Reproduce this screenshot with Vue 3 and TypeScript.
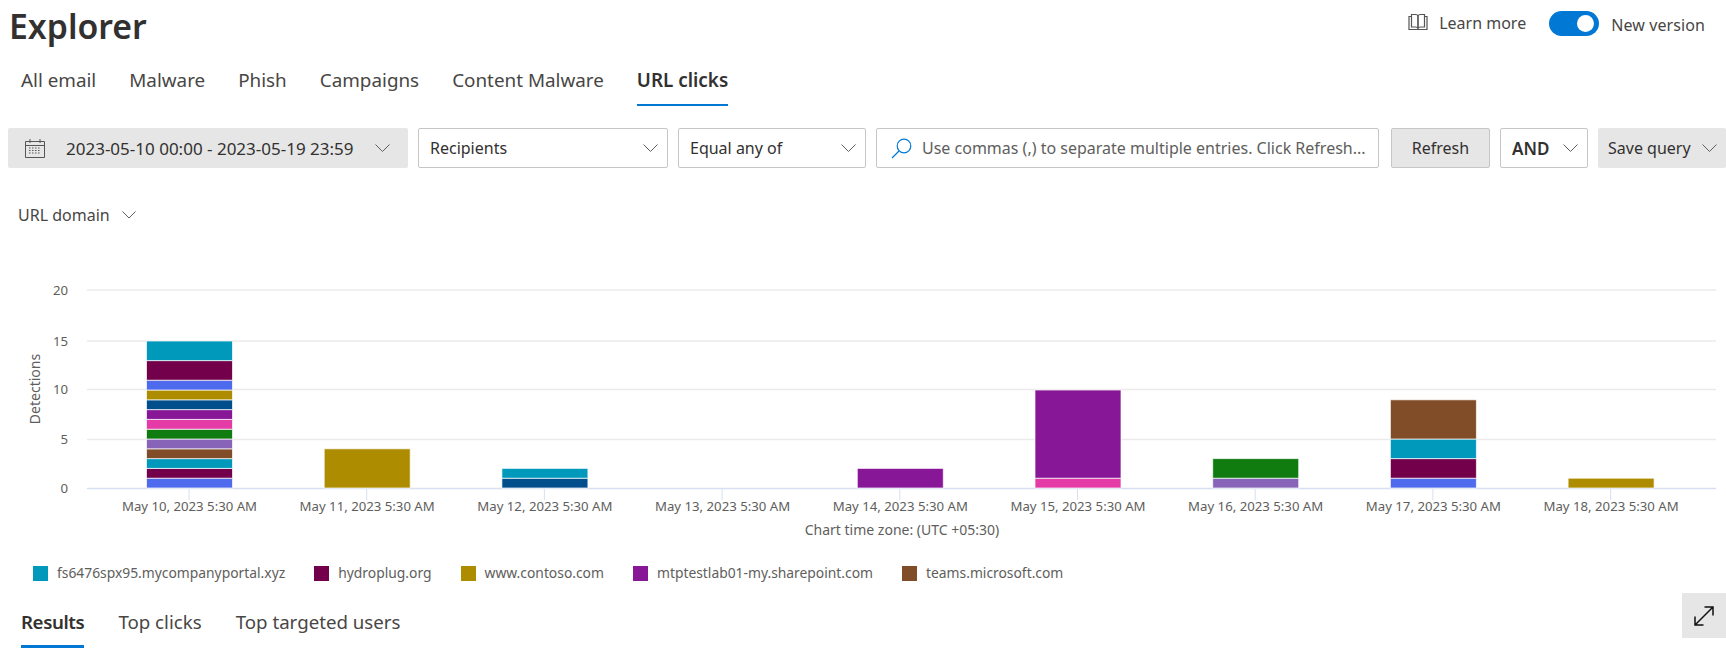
<template>
  <div class="page">
    <header class="top">
      <h1 class="title">Explorer</h1>
      <div class="top-actions">
        <svg class="book" width="20" height="18" viewBox="0 0 20 18" fill="none" stroke="#555" stroke-width="1.2">
          <path d="M3.5 1.5h4c1.3 0 2.5.8 2.5 2v12c-.5-1-1.4-1.500-2.500-1.500h-4z" />
          <path d="M16.500 1.500h-4c-1.300 0-2.500.8-2.500 2v12c.5-1 1.400-1.500 2.500-1.500h4z" />
          <path d="M3.500 3.500H1v13h18v-13h-2.500" />
        </svg>
        <span class="learn">Learn more</span>
        <span class="toggle"><span class="knob"></span></span>
        <span class="version">New version</span>
      </div>
    </header>

    <nav class="tabs main-tabs">
      <span v-for="t in mainTabs" :key="t" class="tab" :class="{ active: t === 'URL clicks' }">{{ t }}</span>
    </nav>

    <div class="toolbar">
      <div class="field date">
        <svg width="20" height="20" viewBox="0 0 20 20" fill="none" stroke="#555">
          <path d="M.5 3.500h19v16H.5zM.5 7.500h19M5 1v4M15 1v4" />
          <path d="M4 10h12M4 12.500h12M4 15h12" stroke-dasharray="1.500 1.500" />
        </svg>
        <span class="date-text">2023-05-10 00:00 - 2023-05-19 23:59</span>
        <svg class="chev" width="15" height="8" viewBox="0 0 15 8"><path d="M.5.5l7 7 7-7" /></svg>
      </div>
      <div class="field box recipients">
        <span>Recipients</span>
        <svg class="chev" width="15" height="8" viewBox="0 0 15 8"><path d="M.5.5l7 7 7-7" /></svg>
      </div>
      <div class="field box equal">
        <span>Equal any of</span>
        <svg class="chev" width="15" height="8" viewBox="0 0 15 8"><path d="M.5.5l7 7 7-7" /></svg>
      </div>
      <div class="field box search">
        <svg width="21" height="21" viewBox="0 0 21 21" fill="none" stroke="#0078d4" stroke-width="1.200">
          <circle cx="13" cy="8" r="6.800" />
          <path d="M8 13l-7 7" />
        </svg>
        <span class="placeholder">Use commas (,) to separate multiple entries. Click Refresh...</span>
      </div>
      <div class="field refresh">Refresh</div>
      <div class="field box and">
        <b>AND</b>
        <svg class="chev" width="15" height="8" viewBox="0 0 15 8"><path d="M.5.5l7 7 7-7" /></svg>
      </div>
      <div class="field save">
        <span>Save query</span>
        <svg class="chev" width="15" height="8" viewBox="0 0 15 8"><path d="M.5.5l7 7 7-7" /></svg>
      </div>
    </div>

    <div class="group-by">
      <span>URL domain</span>
      <svg class="chev" width="14" height="8" viewBox="0 0 14 8"><path d="M.5.5L7 7 13.500.5" /></svg>
    </div>

    <svg class="chart" width="1726" height="300" viewBox="0 240 1726 300">
      <g v-for="g in grid" :key="g.label">
        <line v-if="g.label !== '0'" x1="87" x2="1716" :y1="g.y" :y2="g.y" stroke="#edebe9" stroke-width="1.500" />
        <text x="68" :y="g.y + 4.500" text-anchor="end" class="axis">{{ g.label }}</text>
      </g>
      <text class="axis title-text" text-anchor="middle" transform="translate(40 389) rotate(-90)">Detections</text>

      <line x1="87" x2="1716" y1="488.500" y2="488.500" stroke="#d6e0f0" stroke-width="1.500" />
      <g v-for="(day, i) in days" :key="day.label">
        <line :x1="cx(i)" :x2="cx(i)" y1="489" y2="500" stroke="#d6e0f0" />
        <text :x="cx(i) + 0.500" y="510.500" text-anchor="middle" class="axis">{{ day.label }}</text>
        <rect
          v-for="s in segments(day.stack)"
          :key="s.y"
          :x="cx(i) - 42.500"
          :y="s.y"
          width="86"
          :height="s.h"
          :fill="s.color"
          stroke="#fff"
          stroke-opacity="0.700"
        />
      </g>
      <text x="902" y="535" text-anchor="middle" class="axis title-text">Chart time zone: (UTC +05:30)</text>
    </svg>

    <div class="legend">
      <span v-for="l in legend" :key="l.name" class="legend-item">
        <i class="swatch" :style="{ background: l.color }"></i>{{ l.name }}
      </span>
    </div>

    <div class="bottom">
      <nav class="tabs result-tabs">
        <span v-for="t in resultTabs" :key="t" class="tab" :class="{ active: t === 'Results' }">{{ t }}</span>
      </nav>
      <div class="expand">
        <svg width="22" height="22" viewBox="0 0 22 22" fill="none" stroke="#111" stroke-width="1.500">
          <path d="M2.500 19.500l17-17M11.500 2h8.500v8.500M2 11.500V20h8.500" />
        </svg>
      </div>
    </div>
  </div>
</template>

<script setup lang="ts">
const mainTabs = ['All email', 'Malware', 'Phish', 'Campaigns', 'Content Malware', 'URL clicks']
const resultTabs = ['Results', 'Top clicks', 'Top targeted users']

const c = {
  cyan: '#0099bc',
  maroon: '#72004a',
  blue: '#4f6bed',
  gold: '#ae8c00',
  navy: '#004e8c',
  purple: '#881798',
  pink: '#e43ba6',
  green: '#107c10',
  violet: '#8764b8',
  brown: '#814d28'
}

const grid = [
  { label: '20', y: 290 },
  { label: '15', y: 341 },
  { label: '10', y: 389.5 },
  { label: '5', y: 439.5 },
  { label: '0', y: 488 }
]

// stacks are bottom to top, [colour, count]
const days: Array<{ label: string; stack: Array<[string, number]> }> = [
  {
    label: 'May 10, 2023 5:30 AM',
    stack: [
      [c.blue, 1], [c.maroon, 1], [c.cyan, 1], [c.brown, 1], [c.violet, 1], [c.green, 1], [c.pink, 1],
      [c.purple, 1], [c.navy, 1], [c.gold, 1], [c.blue, 1], [c.maroon, 2], [c.cyan, 2]
    ]
  },
  { label: 'May 11, 2023 5:30 AM', stack: [[c.gold, 4]] },
  { label: 'May 12, 2023 5:30 AM', stack: [[c.navy, 1], [c.cyan, 1]] },
  { label: 'May 13, 2023 5:30 AM', stack: [] },
  { label: 'May 14, 2023 5:30 AM', stack: [[c.purple, 2]] },
  { label: 'May 15, 2023 5:30 AM', stack: [[c.pink, 1], [c.purple, 9]] },
  { label: 'May 16, 2023 5:30 AM', stack: [[c.violet, 1], [c.green, 2]] },
  { label: 'May 17, 2023 5:30 AM', stack: [[c.blue, 1], [c.maroon, 2], [c.cyan, 2], [c.brown, 4]] },
  { label: 'May 18, 2023 5:30 AM', stack: [[c.gold, 1]] }
]

const legend = [
  { name: 'fs6476spx95.mycompanyportal.xyz', color: c.cyan },
  { name: 'hydroplug.org', color: c.maroon },
  { name: 'www.contoso.com', color: c.gold },
  { name: 'mtptestlab01-my.sharepoint.com', color: c.purple },
  { name: 'teams.microsoft.com', color: c.brown }
]

function cx(i: number): number {
  return 189 + i * 177.7
}

function segments(stack: Array<[string, number]>) {
  const out: Array<{ y: number; h: number; color: string }> = []
  let total = 0
  for (const [color, n] of stack) {
    const bottom = 488 - total * 9.8
    total += n
    const top = 488 - total * 9.8
    out.push({ y: top, h: bottom - top, color })
  }
  return out
}
</script>

<style scoped>
.page {
  width: 1726px;
  height: 652px;
  overflow: hidden;
  background: #fff;
  color: #323130;
  font-family: 'Noto Sans', 'Open Sans', sans-serif;
}
.top {
  height: 60px;
  display: flex;
  justify-content: space-between;
  padding-left: 9px;
  padding-right: 21px;
}
.title {
  margin: 6px 0 0;
  font-size: 33.8px;
  line-height: 40px;
  font-weight: 600;
}
.top-actions {
  display: flex;
  align-items: flex-start;
  padding-top: 11px;
  font-size: 16px;
  color: #484644;
}
.book {
  margin-top: 2px;
  margin-right: 11px;
}
.learn {
  line-height: 24px;
}
.toggle {
  width: 50px;
  height: 25px;
  margin: 0 12px 0 23px;
  border-radius: 13px;
  background: #0078d4;
  position: relative;
}
.knob {
  position: absolute;
  right: 5px;
  top: 4px;
  width: 17px;
  height: 17px;
  border-radius: 50%;
  background: #fff;
}
.version {
  line-height: 28px;
  letter-spacing: 0.1px;
}
.tabs {
  display: flex;
}
.tab {
  box-sizing: border-box;
  color: #484644;
  border-bottom-style: solid;
  border-bottom-color: transparent;
}
.tabs .tab.active {
  font-weight: 600;
  color: #323130;
  border-bottom-color: #0078d4;
}
.main-tabs {
  height: 46px;
  padding-left: 21px;
  gap: 33px;
  font-size: 18.85px;
}
.main-tabs .tab {
  height: 46px;
  line-height: 40px;
  border-bottom-width: 2px;
}
.toolbar {
  display: flex;
  gap: 10px;
  margin-top: 22px;
  padding-left: 8px;
  font-size: 16px;
}
.field {
  box-sizing: border-box;
  height: 40px;
  display: flex;
  align-items: center;
  flex: none;
  border-radius: 2px;
  color: #323130;
}
.box {
  background: #fff;
  border: 1px solid #c8c6c4;
  padding-left: 11px;
}
.chev {
  flex: none;
  fill: none;
  stroke: #605e5c;
  stroke-width: 1;
}
.date {
  width: 400px;
  background: #e6e6e6;
  padding-left: 17px;
}
.date-text {
  margin-left: 21px;
  font-size: 17px;
}
.date .chev {
  margin-left: 21px;
}
.recipients {
  width: 250px;
}
.equal {
  width: 188px;
}
.recipients .chev,
.equal .chev,
.and .chev {
  margin-left: auto;
  margin-right: 9px;
}
.search {
  width: 503px;
  padding-left: 14px;
}
.placeholder {
  margin-left: 10px;
  white-space: nowrap;
  color: #605e5c;
}
.refresh {
  width: 99px;
  margin-left: 2px;
  justify-content: center;
  background: #e6e6e6;
  border: 1px solid #c8c6c4;
}
.and {
  width: 88px;
}
.and b {
  font-size: 17px;
  font-weight: 600;
}
.save {
  width: 128px;
  padding-left: 10px;
  background: #e6e6e6;
}
.save .chev {
  margin-left: 11px;
}
.group-by {
  display: flex;
  align-items: center;
  gap: 12px;
  height: 24px;
  margin-top: 35px;
  padding-left: 18px;
  font-size: 16px;
  color: #484644;
}
.chart {
  display: block;
  margin-top: 13px;
}
.axis {
  font-size: 13.2px;
  fill: #605e5c;
}
.title-text {
  font-size: 14px;
}
.legend {
  display: flex;
  gap: 29px;
  height: 20px;
  margin-top: 23px;
  padding-left: 33px;
  font-size: 13.85px;
  line-height: 20px;
  color: #605e5c;
}
.legend-item {
  display: flex;
  align-items: center;
  white-space: nowrap;
}
.swatch {
  width: 15px;
  height: 15px;
  margin-right: 9px;
}
.bottom {
  display: flex;
  justify-content: space-between;
  margin-top: 20px;
}
.result-tabs {
  padding-left: 21px;
  gap: 34px;
  font-size: 18.7px;
}
.result-tabs .tab {
  height: 45px;
  line-height: 38px;
  border-bottom-width: 3px;
}
.result-tabs .tab.active {
  letter-spacing: -0.4px;
}
.expand {
  width: 44px;
  height: 45px;
  margin-top: -10px;
  display: flex;
  align-items: center;
  justify-content: center;
  background: #e6e6e6;
}
</style>

<style>
html,
body {
  margin: 0;
  background: #fff;
}
</style>
